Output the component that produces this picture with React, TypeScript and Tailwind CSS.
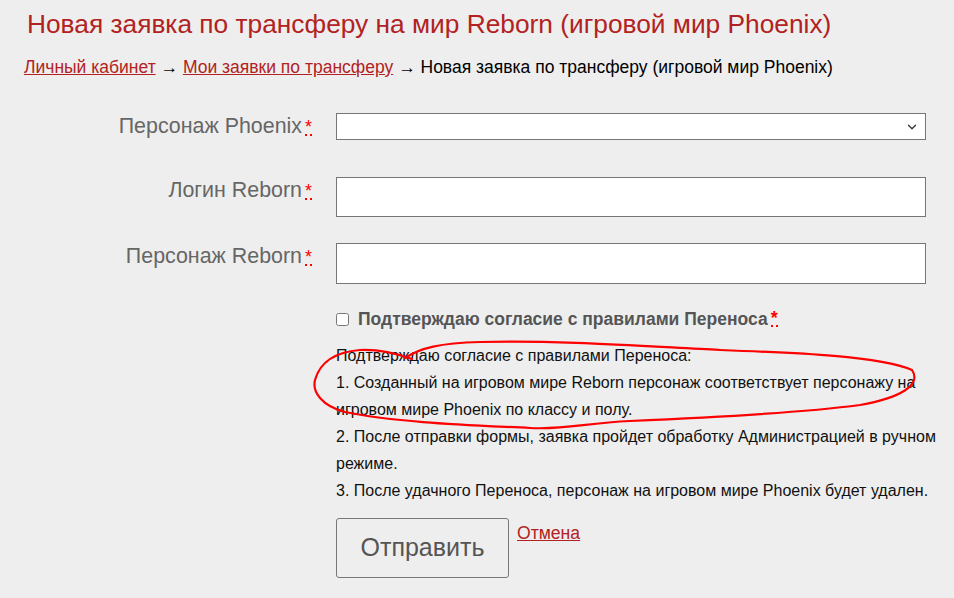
import { ChevronDown } from "lucide-react";

const Req = () => (
  <abbr
    title="обязательное поле"
    className="ml-[3px] text-[18px] text-[#ff0000] no-underline border-b-2 border-dotted border-[#ff0000] leading-[14px] inline-block h-[16px]"
  >
    *
  </abbr>
);

function Row({ label, children, top }: { label: string; children: React.ReactNode; top: string }) {
  return (
    <div className={`flex items-start ${top}`}>
      <label className="w-[312px] shrink-0 text-right text-[21.4px] leading-[27px] text-[#666666]">
        {label}
        <Req />
      </label>
      <div className="ml-[24px] w-[590px]">{children}</div>
    </div>
  );
}

export default function App() {
  return (
    <div
      className="relative min-h-[598px] w-[954px] overflow-hidden bg-[#eeeeee]"
      style={{ fontFamily: '"Liberation Sans", Arial, sans-serif' }}
    >
      <h1 className="pl-[27px] pt-[8px] text-[26.3px] leading-[32px] text-[#b22222]">
        Новая заявка по трансферу на мир Reborn (игровой мир Phoenix)
      </h1>

      <div className="mt-[16px] pl-[24px] text-[17.5px] leading-[22px] text-black">
        <a href="#" className="text-[#b22222] underline">Личный кабинет</a>
        {" → "}
        <a href="#" className="text-[#b22222] underline">Мои заявки по трансферу</a>
        {" → Новая заявка по трансферу (игровой мир Phoenix)"}
      </div>

      <form>
        <Row label="Персонаж Phoenix" top="mt-[35px]">
          <div className="relative h-[27px] w-full border border-[#767676] bg-white">
            <ChevronDown className="absolute right-[6px] top-[6px] h-[14px] w-[14px] text-[#333]" strokeWidth={2.2} />
          </div>
        </Row>

        <Row label="Логин Reborn" top="mt-[37px]">
          <input type="text" className="block h-[40px] w-full border border-[#767676] bg-white" />
        </Row>

        <Row label="Персонаж Reborn" top="mt-[26px]">
          <input type="text" className="block h-[41px] w-full border border-[#767676] bg-white" />
        </Row>

        <div className="ml-[336px] mt-[24px] w-[606px]">
          <label className="flex items-center text-[17.5px] font-bold leading-[22px] text-[#555555]">
            <input type="checkbox" className="mr-[9px] h-[13px] w-[13px]" />
            Подтверждаю согласие с правилами Переноса
            <Req />
          </label>

          <div className="mt-[12px] text-[16px] leading-[27px] text-[#111111]">
            Подтверждаю согласие с правилами Переноса:
            <br />
            1. Созданный на игровом мире Reborn персонаж соответствует персонажу на игровом мире Phoenix по классу и полу.
            <br />
            2. После отправки формы, заявка пройдет обработку Администрацией в ручном режиме.
            <br />
            3. После удачного Переноса, персонаж на игровом мире Phoenix будет удален.
          </div>

          <div className="mt-[14px] flex items-start">
            <button
              type="button"
              className="h-[60px] w-[173px] rounded-[3px] border border-[#777777] bg-[#eeeeee] text-[25px] text-[#555555]"
            >
              Отправить
            </button>
            <a href="#" className="ml-[8px] mt-[5px] text-[17.6px] leading-[20px] text-[#b22222] underline">
              Отмена
            </a>
          </div>
        </div>
      </form>

      <svg className="pointer-events-none absolute left-0 top-0" width="954" height="598">
        <path
          d="M 405 358 C 420 348, 440 343, 480 342 C 560 340, 640 346, 720 350 C 800 353, 880 356, 912 370 C 922 385, 900 398, 860 405 C 800 413, 700 418, 630 421 C 585 423, 565 430, 530 428 C 470 425, 400 423, 345 412 C 322 406, 312 392, 315 380 C 320 362, 335 352, 360 350 C 380 349, 398 354, 412 359"
          fill="none"
          stroke="#ff0000"
          strokeWidth="2.2"
          strokeLinecap="round"
        />
      </svg>
    </div>
  );
}
